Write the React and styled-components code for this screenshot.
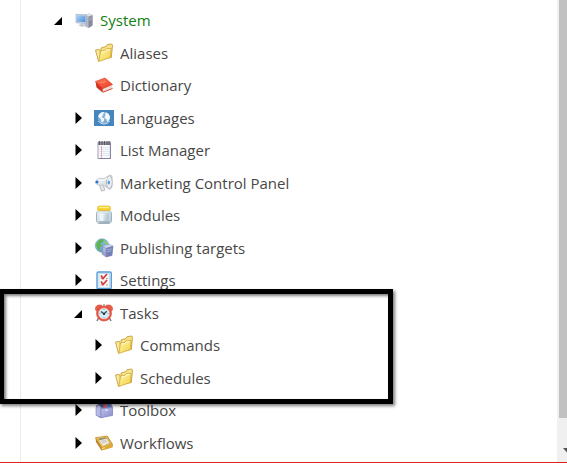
import React, { useState } from 'react';
import styled, { createGlobalStyle } from 'styled-components';


const GlobalStyle = createGlobalStyle`
    * {
        box-sizing: border-box;
    }
    body {
        margin: 0;
        background-color: white;
        font-family: 'Open Sans', sans-serif;
        overflow: hidden;
    }
`;

const Page = styled.div`
    position: relative;
    display: flex;
    height: 100vh;
    overflow: hidden;
    border-bottom: 1px solid #e0201b;
`;

const TreePanel = styled.nav`
    flex: 1;
    margin-left: 20px;
    padding: 4px 0 0 33px;
    border-left: 1px solid #ebebeb;
`;

const TreeList = styled.ul`
    margin: 0;
    padding: 0;
    list-style: none;
`;

const TreeRow = styled.li`
    display: flex;
    align-items: center;
    height: 32px;
    padding-left: ${({ $depth }) => $depth * 20}px;
    &:nth-child(odd) {
        height: 33px;
        padding-bottom: 1px;
    }
`;

const Toggle = styled.button`
    display: flex;
    width: 20px;
    height: 20px;
    padding: 0;
    border: none;
    background: none;
    cursor: pointer;
`;

const Spacer = styled.span`
    width: 20px;
`;

const Icon = styled.svg`
    width: 20px;
    height: 20px;
    margin-right: 6px;
    flex: none;
`;

const Label = styled.a`
    font-size: 15px;
    line-height: 20px;
    color: ${({ $active }) => ($active ? '#118011' : '#474747')};
    text-decoration: none;
    white-space: nowrap;
`;

const ScrollTrack = styled.div`
    display: flex;
    flex-direction: column;
    justify-content: space-between;
    width: 10px;
    padding-left: 2px;
    background-color: #f0f0f0;
    overflow: hidden;
`;

const ScrollThumb = styled.div`
    flex: 1;
    background-color: #c1c1c1;
`;

const ScrollArrow = styled.svg`
    width: 8px;
    height: 44px;
`;

const Highlight = styled.div`
    position: absolute;
    top: 289px;
    left: -1px;
    width: 394px;
    height: 115px;
    border: 5px solid black;
    box-shadow: 2px 2px 3px rgba(0, 0, 0, 0.5), inset 2px 2px 3px rgba(0, 0, 0, 0.5);
    pointer-events: none;
`;

const Gradients = styled.svg`
    position: absolute;
    width: 0;
    height: 0;
`;

const icons = {
    system: (
        <>
            <path d="M11 5l4-1.500 3.500 1.500v10.500l-4 2.500-3.500-1.500z" fill="#b6b8c2" />
            <path d="M14.500 6.500l4-1.500v10.500l-4 2.500z" fill="#858a9e" />
            <path d="M11 5l4-1.500 3.500 1.500-4 1.500z" fill="#dedfe6" />
            <path d="M15.500 8l2-.8M15.500 10l2-.8" stroke="#c9cbd6" strokeWidth=".8" />
            <path d="M4 15l5-1.500 3 2-4 1.500z" fill="#c5c8d0" />
            <path d="M2 4.300l10.500.5v9L2 12.700z" fill="#c6d3e6" stroke="#9aa9c3" strokeWidth=".6" />
            <path d="M3 5.300l8.500.5v6.500L3 11.500z" fill="url(#blue)" />
        </>
    ),
    folder: (
        <>
            <path d="M7 5l5-1.500 1-1.800 4.700-.7.800 1.200-1.200 12.300L7 16z" fill="#f6e28c" stroke="#c69f35" strokeWidth=".9" />
            <path d="M1.500 7l3.500-.5 1 .8.500 9-2 1.900z" fill="#fbeaa0" stroke="#c69f35" strokeWidth=".9" />
            <path d="M6.500 8l4.200-.6 1.200-1.500 5.200-.6-.7 9.200-11.600 4z" fill="url(#gold)" stroke="#cfa936" strokeWidth=".8" />
            <path d="M7.500 9l3.700-.6 1.200-1.500 3.600-.4" stroke="#fffbd4" fill="none" />
        </>
    ),
    book: (
        <>
            <path d="M1.500 6.500l7.500 6-.3 5L2.500 12.500z" fill="#cf3421" />
            <path d="M8.700 13.500L18 10l.5 3-9.500 3.800z" fill="#eadfd9" />
            <path d="M8.700 17.300l9.800-3.800" stroke="#d63a26" />
            <path d="M1.500 6.500L11 3l7.500 6.500-9.500 4z" fill="url(#red)" stroke="#dc412c" strokeWidth=".7" />
            <path d="M6 7l4.500-1.500 1.500 1.200-4.500 1.600z" fill="#ff9b78" />
            <path d="M7 7.200l3.500-1.200" stroke="#d84630" strokeWidth=".6" />
        </>
    ),
    flag: (
        <>
            <rect y="2" width="20" height="16" fill="#4585bd" />
            <circle cx="10" cy="10" r="6.200" fill="#7eadd4" />
            <path d="M4.200 8.500C5 5.500 7 4 9.500 4l1 1.200-1.700.8.700 1.200-2 1.300 1.300 1.300 1.500.7-.3 2-1.500 2-1.200-.8-.5-2.700z" fill="#f4f9fc" />
            <path d="M11.500 4.500c2.500.3 4.200 2.300 4.500 5l-1 2.700-1.700 1.800-1-3-1.500-.5-.3-2 1.300-1.300-.8-.7z" fill="#f4f9fc" />
            <path d="M4.300 13c2.700 4 8.700 4 11.400 0" stroke="#c9deee" strokeWidth="1" fill="none" />
        </>
    ),
    notes: (
        <>
            <rect x="4" y="2.500" width="12.300" height="16" fill="#fafcff" stroke="#9b9cb8" />
            <path d="M4.500 7.500h11M4.500 9.500h11M4.500 11.500h11M4.500 13.500h11M4.500 15.500h11" stroke="#d5e1f3" strokeWidth=".8" />
            <path d="M7.500 6v12" stroke="#f0a79e" />
            <path d="M4 1.500h12.500v3.500H4z" fill="#8f8e98" />
            <path d="M5.500 1v4M8 1v4M10.500 1v4M13 1v4M15 1v4" stroke="#4b4b55" strokeWidth=".8" />
            <path d="M16.500 3v15.500H5" stroke="#7a7b9c" fill="none" strokeWidth=".8" />
        </>
    ),
    megaphone: (
        <>
            <path d="M5 11l4 .5 2 5.500-3.500 1.200z" fill="#e3e5e8" stroke="#a5abb2" strokeWidth=".7" />
            <path d="M2 7.500l3-2.300 5 .3L16.500 2l1.500 1v11l-2 2.500-6.500-4.300-6-.2L1.500 10z" fill="url(#silver)" stroke="#b2b7bd" strokeWidth=".7" />
            <ellipse cx="15.300" cy="9.200" rx="2.900" ry="6.500" fill="#eceff2" stroke="#a0a7b0" strokeWidth=".7" />
            <ellipse cx="14.800" cy="9.500" rx="1.200" ry="2" fill="#5a9cd2" />
            <circle cx="3" cy="9" r="1.500" fill="#2877d0" />
            <path d="M5 7l5 .2 3-2" stroke="white" fill="none" />
        </>
    ),
    jar: (
        <>
            <path d="M4.500 5.500L2.500 8v8.500l2.200 2h10.600l2.200-2V8l-2-2.500z" fill="url(#glass)" stroke="#9babb7" strokeWidth=".9" />
            <path d="M5.500 8.500h4v8h-4z" fill="#f4fafc" opacity=".8" />
            <path d="M12 8.500h3v7h-3z" fill="#aac2d1" opacity=".6" />
            <path d="M5 17h10" stroke="#7d93a2" />
            <rect x="3.500" y="1" width="13" height="4.700" rx="1.800" fill="#f7d02c" stroke="#e0b42f" strokeWidth=".6" />
            <path d="M5 2.500h10" stroke="#fff08c" strokeWidth="1.300" />
        </>
    ),
    publish: (
        <>
            <circle cx="8" cy="7.500" r="6.700" fill="url(#blue)" stroke="#5c93c0" strokeWidth=".6" />
            <path d="M2 6l3.500-4.500L10 1.200 9 4 6.500 5.500 8 8l-2 1.500.5 4-3.300-2.500z" fill="#5fb54c" />
            <path d="M11 2l3 3 .5 3-2.500-.5-1.500-3z" fill="#8ccf6d" />
            <path d="M8.500 8l7-1.500 3.500 1.500-1 9.500-6 1.500-4-3z" fill="#98a3cc" stroke="#7a85b1" strokeWidth=".5" />
            <path d="M8.500 8l7-1.500 3.500 1.500-6.500 2z" fill="#c9d2ec" />
            <path d="M12.500 10l6.500-2-1 9.500-6 1.500z" fill="#7480b3" />
            <path d="M13.200 12l4.500-1.300M13 14l4.500-1.300" stroke="#a4b5de" strokeWidth=".9" />
            <path d="M9.300 10.500l2 .8M9.300 12.500l2 .8" stroke="#d3dbf3" strokeWidth=".8" />
        </>
    ),
    settings: (
        <>
            <rect x="3" y="2" width="14.300" height="16.800" rx="1.200" fill="#e2eff8" stroke="#5a9fd6" strokeWidth="1.400" />
            <rect x="5" y="3.500" width="10.300" height="13.800" fill="#f8f7f7" stroke="#b5d6ed" strokeWidth=".7" />
            <path d="M7 5.500l2 3 4-4.500M7 11.500l2 3 4-4.500" fill="none" stroke="#d03f3c" strokeWidth="1.700" />
            <path d="M6.500 8.500h1.500M12 8.500h2M6.500 15h1.500M12 15h2" stroke="#d69897" />
        </>
    ),
    clock: (
        <>
            <path d="M5 14l-2 4M15 14l2 4" stroke="#77797e" strokeWidth="1.500" />
            <path d="M1.500 7C1 3 3.500 1 8 2.500L3 8zM18.500 7c.5-4-2-6-6.500-4.500L17 8z" fill="#e9604c" stroke="#cb4436" strokeWidth=".6" />
            <path d="M10 1v3" stroke="#a1a3a8" strokeWidth="1.500" />
            <circle cx="10" cy="10.500" r="7.500" fill="#ea5541" stroke="#cf4435" strokeWidth=".6" />
            <circle cx="10" cy="10.500" r="5.500" fill="#d1eef8" stroke="#f6aaa0" strokeWidth=".6" />
            <path d="M7 8.500l3 2.300 2.800-2.500" stroke="#354a57" fill="none" strokeWidth="1.300" />
            <circle cx="10" cy="11" r="1" fill="#1d2c36" />
            <path d="M10 6v.8M10 14.300v.8M5.500 10.500h.8M13.700 10.500h.8" stroke="#6d9fb2" />
        </>
    ),
    toolbox: (
        <>
            <path d="M2 6l4-4h10l2.500 4v9L6 18l-4-3z" fill="#7e85c2" />
            <path d="M5 6V3h3v5zM8 7.500V2.500h2.500v5z" fill="#535a97" />
            <path d="M9.500 4h3v3.500h-3z" fill="#e25143" />
            <path d="M13.500 3H16v4h-2.500z" fill="#5577cb" />
            <path d="M2 8.500c0-4 4-5 5-.5v9.500l-5-2.300z" fill="#b6b9e3" stroke="#7d83b9" strokeWidth=".6" />
            <path d="M7 8.500l11.500-1v8L7 17.800z" fill="url(#violet)" stroke="#7a7fb7" strokeWidth=".6" />
            <path d="M11 9.500l3-.4v1.500l-3 .4z" fill="#dbddf5" />
        </>
    ),
    workflow: (
        <>
            <path d="M1.500 5l12-2 5 8v3L7.500 17.500 2 9z" fill="#b98325" />
            <path d="M1.500 4.700L13 3l5.500 8.500-11 3.300z" fill="#ebbb51" stroke="#c08c30" strokeWidth=".7" />
            <path d="M4.500 5.800l7.500-1.300 3.800 6-7.300 2z" fill="#8e8970" />
            <path d="M5 7.500l7.500-2 3 4.500-6.500 3z" fill="#eceae0" />
            <path d="M7 8.300l5-1.300M8 9.800l5-1.300" stroke="#bbbab2" strokeWidth=".8" />
            <path d="M7.500 14.800l3-.8 1-1.300 3-.8 1.300.6 2.700-1v3l-11 3z" fill="#dfa936" />
            <path d="M8 15.500l3-.8" stroke="#ffe293" />
        </>
    ),
};

const items = [
    { name: 'System', icon: 'system', depth: 0, parent: true, open: true },
    { name: 'Aliases', icon: 'folder', depth: 1 },
    { name: 'Dictionary', icon: 'book', depth: 1 },
    { name: 'Languages', icon: 'flag', depth: 1, parent: true },
    { name: 'List Manager', icon: 'notes', depth: 1, parent: true },
    { name: 'Marketing Control Panel', icon: 'megaphone', depth: 1, parent: true },
    { name: 'Modules', icon: 'jar', depth: 1, parent: true },
    { name: 'Publishing targets', icon: 'publish', depth: 1, parent: true },
    { name: 'Settings', icon: 'settings', depth: 1, parent: true },
    { name: 'Tasks', icon: 'clock', depth: 1, parent: true, open: true },
    { name: 'Commands', icon: 'folder', depth: 2, parent: true },
    { name: 'Schedules', icon: 'folder', depth: 2, parent: true },
    { name: 'Toolbox', icon: 'toolbox', depth: 1, parent: true },
    { name: 'Workflows', icon: 'workflow', depth: 1, parent: true },
];

const gradients = {
    blue: ['#a9d5f8', '#4a8ad2'],
    gold: ['#fff7a8', '#f2cf48'],
    red: ['#ff7952', '#ea3d28'],
    silver: ['#fdfdfe', '#c8cdd3'],
    glass: ['#e9f3f7', '#b2c8d5'],
    violet: ['#bec1ea', '#878dca'],
};

const TreeItem = ({ item }) => {

    const [open, setOpen] = useState(Boolean(item.open))

    return (
        <TreeRow $depth={item.depth}>
            {item.parent ? (
                <Toggle aria-label={`Toggle ${item.name}`} aria-expanded={open} onClick={() => setOpen(!open)}>
                    <svg width="20" height="20" viewBox="0 0 20 20">
                        <path d={open ? 'M8 7v8H0z' : 'M1.500 4l6.500 6-6.500 6z'} fill="black" />
                    </svg>
                </Toggle>
            ) : <Spacer />}
            <Icon viewBox="0 0 20 20" aria-hidden="true">{icons[item.icon]}</Icon>
            <Label href="#" $active={item.depth === 0}>{item.name}</Label>
        </TreeRow>
    )
}

const App = () => (
    <>
        <GlobalStyle />
        <Gradients aria-hidden="true">
            <defs>
                {Object.entries(gradients).map(([id, [from, to]]) => (
                    <linearGradient key={id} id={id} x1="0" y1="0" x2="1" y2="1">
                        <stop offset="0" stopColor={from} />
                        <stop offset="1" stopColor={to} />
                    </linearGradient>
                ))}
            </defs>
        </Gradients>
        <Page>
            <TreePanel aria-label="Content tree">
                <TreeList>
                    {items.map(item => <TreeItem key={item.name} item={item} />)}
                </TreeList>
            </TreePanel>
            <ScrollTrack>
                <ScrollThumb />
                <ScrollArrow viewBox="0 0 8 44">
                    <path d="M4 30h9l-4.500 5z" fill="#505050" />
                </ScrollArrow>
            </ScrollTrack>
            <Highlight />
        </Page>
    </>
)

export default App
